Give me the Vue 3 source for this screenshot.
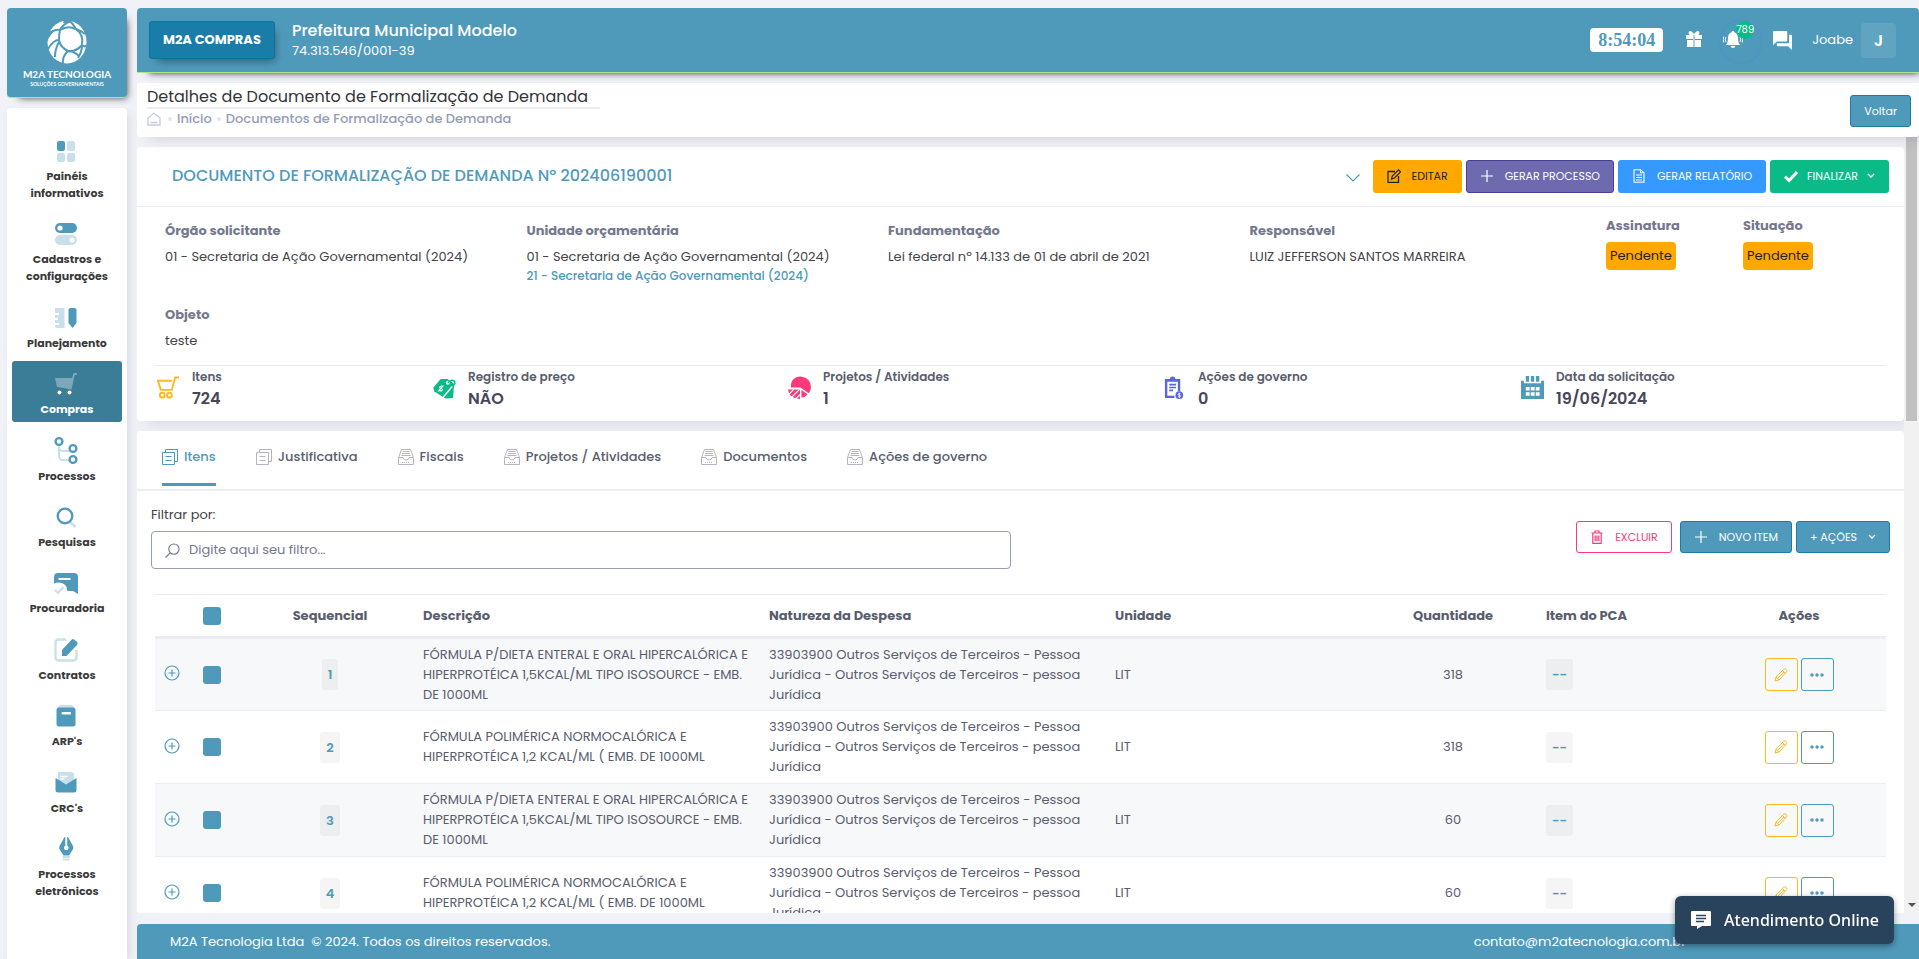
<script setup>
import { ref } from 'vue'

const glyphs = {
  painel: '<rect x="3" y="2" width="8" height="10" rx="2" fill="#4f9abb"/><rect x="13" y="2" width="8" height="10" rx="2" fill="#c9dfe9"/><rect x="3" y="14" width="8" height="9" rx="2" fill="#c9dfe9"/><rect x="13" y="14" width="8" height="9" rx="2" fill="#c9dfe9"/>',
  toggles: '<rect x="1" y="1" width="22" height="10" rx="5" fill="#4f9abb"/><rect x="1" y="13" width="22" height="10" rx="5" fill="#c9dfe9"/><circle cx="6" cy="6" r="2.6" fill="#fff"/><circle cx="18" cy="18" r="2.6" fill="#fff"/>',
  ruler: '<path d="M1 2h9.500v20H3a2 2 0 0 1-2-2v-1h4v-2H1v-3h3v-2H1V9h4V7H1z" fill="#c9dfe9"/><path d="M14.500 4a2 2 0 0 1 2-2h4a2 2 0 0 1 2 2v13l-4 5-4-5z" fill="#4f9abb"/>',
  cart: '<path d="M1 6h17l1.300-4.400Q19.500 1 20.200 1H23v2h-2.200L17.500 17.500 3 15z" fill="#7aa7ba"/><circle cx="5.500" cy="20.500" r="2" fill="#fff"/><circle cx="15.500" cy="20.500" r="2" fill="#fff"/>',
  branch: '<path d="M5 7v10q0 4 4 4h6M5 8q0 4 4 4h6" fill="none" stroke="#c9dfe9" stroke-width="2"/><g fill="#fff" stroke="#4f9abb" stroke-width="2.400"><circle cx="5" cy="2.500" r="3.400"/><circle cx="19" cy="9.500" r="3.400"/><circle cx="19" cy="20.500" r="3.400"/></g>',
  search: '<path d="m16 17 5.500 5" stroke="#c9dfe9" stroke-width="2.500"/><circle cx="11" cy="11" r="7.300" fill="none" stroke="#4f9abb" stroke-width="2.300"/>',
  board: '<path d="M4 2h16q4 0 4 4v17l-5-3h-5.500q-.5-8-8.500-8.500-3 0-5 1V6q0-4 4-4z" fill="#4f9abb"/><path d="M4.500 8h12" stroke="#fff" stroke-width="2"/><path d="m1 19 3 3 5.500-6" fill="none" stroke="#c9dfe9" stroke-width="2.200"/>',
  contract: '<path d="M12 1.500H5Q1.500 1.500 1.500 5v14q0 3.500 3.500 3.500h14q3.500 0 3.500-3.500v-7" fill="none" stroke="#c9dfe9" stroke-width="2.300"/><path d="M8 18v-6L17.500 1.800q1.500-1.500 3 0L23 4q1.200 1.500 0 3L12.500 18z" fill="#4f9abb"/>',
  box: '<path d="M4 3q1-2 3-2h10q2 0 3 2v2H4z" fill="#c9dfe9"/><rect x="2.500" y="3.500" width="19" height="19" rx="2.500" fill="#4f9abb"/><rect x="7.500" y="8" width="9.500" height="2.400" rx="1" fill="#fff"/>',
  mail: '<path d="M4 1h13q3 0 3 3v8l-8 4-8-4z" fill="#c9dfe9"/><path d="M6.500 5.500h7M6.500 8h4" stroke="#fff" stroke-width="1.300"/><path d="M1.500 7 12 13.500 22.500 7v12q0 2.500-2.500 2.500H4q-2.500 0-2.500-2.500z" fill="#4f9abb"/>',
  pen: '<path d="m10.500 0-5 9q-.7 2 .2 3.500l3.800 6h5.500l3.800-6q.9-1.500.2-3.500L14 0h-.8v8.700a2.300 2.300 0 1 1-1.900 0V0z" fill="#4f9abb"/><path d="M8.700 20h7.200M9 22.500h6.500" stroke="#c9dfe9" stroke-width="1.800"/>'
}

const menu = [
  { icon: 'painel', label: 'Painéis informativos' },
  { icon: 'toggles', label: 'Cadastros e configurações' },
  { icon: 'ruler', label: 'Planejamento' },
  { icon: 'cart', label: 'Compras', active: true },
  { icon: 'branch', label: 'Processos' },
  { icon: 'search', label: 'Pesquisas' },
  { icon: 'board', label: 'Procuradoria' },
  { icon: 'contract', label: 'Contratos' },
  { icon: 'box', label: "ARP's" },
  { icon: 'mail', label: "CRC's" },
  { icon: 'pen', label: 'Processos eletrônicos' }
]

const statGlyphs = {
  cart: '<g fill="none" stroke="#ffb822" stroke-width="2"><path d="M0 5h15.500M1 5l3 9.500h11.500L19 1.500h4"/><circle cx="5.500" cy="20" r="2.500"/><circle cx="13" cy="20" r="2.500"/></g>',
  tag: '<path d="M8 3h7l7 5-1 15-8 .5L1 16 .5 12z" fill="#0abb87"/><path d="m10 23 10-12" stroke="#fff" stroke-width="1.500"/><circle cx="15.500" cy="7" r="2" fill="#fff"/><path d="M15.500 7q4-4 7-1.500 1.500 3-2 4.500" fill="none" stroke="#0abb87" stroke-width="1.500"/><path d="M10.500 11q-3-1-3.500.7c0 1.800 3 .8 2.800 2.800-.8 1.800-3 1-4 .2M10.800 10l-5.500 6" fill="none" stroke="#fff" stroke-width="1.200"/>',
  pie: '<path d="M3 12Q2.500 1 13.500.5 24 2 24 12q-.5 4-2.500 6L13 12z" fill="#fd397a"/><path d="M14 14.500 20.500 19q-3 3.500-6.500 3.500z" fill="#fd397a"/><path d="M0 14h12.500v10Q1 23.500 0 14z" fill="#fd397a"/><path d="m1 19 5-5M4 22l8-8M8 24l5-5" stroke="#fff" stroke-width="1.300"/>',
  clip: '<path d="M2 3h5q.5-2.500 3-2.500T13 3h5v13h-2.500V6h-11v14.500H12V23H2z" fill="#5867dd"/><path d="M7 4.500h6M6.500 9h7M6.500 12h7M6.500 15h4" stroke="#5867dd" stroke-width="1.600"/><circle cx="17" cy="20" r="4" fill="#5867dd"/><path d="M18.300 18.500q-2.600-.8-2.600.5 0 1 1.300 1 1.500.2 1.300 1.200-.6 1-2.600.3M17 17.500v5.500" fill="none" stroke="#fff" stroke-width=".8"/>',
  cal: '<path d="M0 5h3v2.500h18V5h3v19H0z" fill="#4f9abb"/><path d="M5 0h3.500v6H5zM10.300 0h3.500v6h-3.500zM15.600 0h3.500v6h-3.500z" fill="#4f9abb"/><path d="M5 11.500h4v3.500H5zM10.200 11.500h4v3.500h-4zM15.400 11.500h4v3.500h-4zM5 17h4v3.500H5zM10.200 17h4v3.500h-4zM15.400 17h4v3.500h-4z" fill="#fff"/>'
}

const stats = [
  { icon: 'cart', label: 'Itens', value: '724' },
  { icon: 'tag', label: 'Registro de preço', value: 'NÃO' },
  { icon: 'pie', label: 'Projetos / Atividades', value: '1' },
  { icon: 'clip', label: 'Ações de governo', value: '0' },
  { icon: 'cal', label: 'Data da solicitação', value: '19/06/2024' }
]

const tabGlyphs = {
  copy: '<path d="M3.500 3.500V.5h12v12h-3M.5 3.500h12v12H.5zM3.500 7.500h6M3.500 11.500h6"/>',
  tray: '<path d="M.5 8.500v7h15v-7h-4.500q-.5 2.500-3 2.500t-3-2.500zM.5 8.500 3.500.5h9l3 8M4.500 2.500h7M4 4.500h8M3.500 6.500h9" /><path d="M4 13.500h8" stroke-dasharray="1 1"/>'
}

const tabs = [
  { icon: 'copy', label: 'Itens' },
  { icon: 'copy', label: 'Justificativa' },
  { icon: 'tray', label: 'Fiscais' },
  { icon: 'tray', label: 'Projetos / Atividades' },
  { icon: 'tray', label: 'Documentos' },
  { icon: 'tray', label: 'Ações de governo' }
]
const activeTab = ref('Itens')
const filter = ref('')

const formulaA = 'FÓRMULA P/DIETA ENTERAL E ORAL HIPERCALÓRICA E HIPERPROTÉICA 1,5KCAL/ML TIPO ISOSOURCE - EMB. DE 1000ML'
const formulaB = 'FÓRMULA POLIMÉRICA NORMOCALÓRICA E HIPERPROTÉICA 1,2 KCAL/ML ( EMB. DE 1000ML'
const nature = '33903900 Outros Serviços de Terceiros - Pessoa Jurídica - Outros Serviços de Terceiros - pessoa Jurídica'
const rows = [
  { seq: 1, desc: formulaA, qty: 318 },
  { seq: 2, desc: formulaB, qty: 318 },
  { seq: 3, desc: formulaA, qty: 60 },
  { seq: 4, desc: formulaB, qty: 60 }
]
</script>

<template>
  <div class="shell">
    <aside class="side">
      <a class="logo" href="#" aria-label="M2A Tecnologia">
        <svg class="globe" viewBox="0 0 40 44" aria-hidden="true">
          <ellipse cx="20" cy="22" rx="19.500" ry="21.500" fill="#fff" />
          <g fill="none" stroke="#4f9abb" stroke-width="2">
            <path d="M13 10q8-5 16-1 8 6 6 16-6 7-14 6-8-4-9-11 0-6 1-10z" />
            <path d="M0 15q7-6 13-5M13 10q3-6 11-9M29 9q-3-5-6-8M29 9q6 2 9 5M35 25q3 3 4 0M35 25q0 7-4 13M21 31q-6 6-5 12M12 20Q6 20 1 29M12 22q-4 7-4 15M21 31q6 0 11 5" />
          </g>
          <path d="M0 14q4-4 9-4-6 4-9 12zM17 0h7l-3 3h-5z" fill="#4f9abb" />
        </svg>
        <span class="logo-name">M2A TECNOLOGIA</span>
        <span class="logo-sub">SOLUÇÕES GOVERNAMENTAIS</span>
      </a>
      <nav class="menu">
        <a v-for="m in menu" :key="m.label" href="#" class="menu-item" :class="{ active: m.active }">
          <span class="menu-icon"><svg viewBox="0 0 24 24" aria-hidden="true" v-html="glyphs[m.icon]" /></span>
          <span class="menu-label">{{ m.label }}</span>
        </a>
      </nav>
    </aside>

    <div class="page">
      <header class="topbar">
        <button class="module" type="button">M2A COMPRAS</button>
        <div class="org">
          <div class="org-name">Prefeitura Municipal Modelo</div>
          <div class="org-id">74.313.546/0001-39</div>
        </div>
        <div class="tools">
          <span class="clock">8:54:04</span>
          <button class="tool gift" type="button" aria-label="Novidades">
            <svg viewBox="0 0 18 16"><path d="M1 4h3.500C2 1 5 -1 7 .8L9 3l2-2.200C13-1 16 1 13.500 4H17v4h-7V4H8v4H1z" fill="#fff" /><path d="M2 9h6v7H2zM10 9h6v7h-6z" fill="#fff" /><path d="M8 4h2v12H8z" fill="#a9cfe0" /></svg>
          </button>
          <button class="tool bell" type="button" aria-label="Notificações">
            <svg viewBox="0 0 20 18"><path d="M10 0q1.300 0 1.300 1.300Q15 2.500 15 7q0 5 2 7H3q2-2 2-7 0-4.500 3.700-5.700Q8.700 0 10 0zM7.500 15h5q-.5 2-2.500 2t-2.500-2z" fill="#fff" /><path d="M3 6q-1.500 2.500 0 5M.8 5.500q-1 3 0 6M17 6q1.500 2.500 0 5M19.200 5.500q1 3 0 6" fill="none" stroke="#fff" stroke-width=".9" /></svg>
            <span class="count">789</span>
          </button>
          <button class="tool chat" type="button" aria-label="Mensagens">
            <svg viewBox="0 0 20 20"><path d="M1 0h13q1 0 1 1v9q0 1-1 1H4l-4 4V1q0-1 1-1z" fill="#fff" /><path d="M17 4h2q1 0 1 1v15l-4-4H5q-1 0-1-1v-2h13z" fill="#fff" /></svg>
          </button>
          <button class="user" type="button"><span>Joabe</span><span class="avatar">J</span></button>
        </div>
      </header>

      <section class="subhead">
        <div>
          <h1>Detalhes de Documento de Formalização de Demanda</h1>
          <nav class="crumbs">
            <a href="#" aria-label="Página inicial"><svg viewBox="0 0 14 14"><path d="M1 13V6l6-5 6 5v7zM3.500 10.500h7" fill="none" stroke="#c5cbe2" stroke-width="1.300" /></svg></a>
            <i></i><a href="#">Início</a><i></i><a href="#">Documentos de Formalização de Demanda</a>
          </nav>
        </div>
        <button class="btn teal back" type="button">Voltar</button>
      </section>

      <div class="viewport">
        <main class="content">
          <section class="card">
            <div class="card-head">
              <h2>DOCUMENTO DE FORMALIZAÇÃO DE DEMANDA Nº 202406190001</h2>
              <button class="collapse" type="button" aria-label="Recolher"><svg viewBox="0 0 14 8"><path d="m.5.500 6.500 6.500 6.500-6.500" fill="none" stroke="#4f9abb" stroke-width="1.200" /></svg></button>
              <div class="doc-actions">
                <button class="btn amber" type="button">
                  <svg viewBox="0 0 14 14"><path d="M8 2.500H1v10.800h10.500V7" fill="none" stroke="#222" stroke-width="1.300" /><path d="M4.500 10 5.300 7 11.500.8l2 2L7.500 9z" fill="none" stroke="#222" stroke-width="1.200" /></svg>EDITAR
                </button>
                <button class="btn purple" type="button">
                  <svg viewBox="0 0 14 14"><path d="M7 1v12M1 7h12" stroke="#fff" stroke-width="1.200" /></svg>GERAR PROCESSO
                </button>
                <button class="btn blue" type="button">
                  <svg viewBox="0 0 14 14"><path d="M2 .7h6.500l3.500 3v9.600H2zM8.500.7v3H12M4 6h6M4 8.500h6M4 11h6" fill="none" stroke="#fff" stroke-width="1.100" /></svg>GERAR RELATÓRIO
                </button>
                <button class="btn green" type="button">
                  <svg viewBox="0 0 14 14"><path d="m1 7.500 4 4 8-8.500" fill="none" stroke="#fff" stroke-width="3" /></svg>FINALIZAR<svg class="caret" viewBox="0 0 8 6"><path d="m1 1 3 3 3-3" fill="none" stroke="#fff" stroke-width="1.400" /></svg>
                </button>
              </div>
            </div>

            <div class="details">
              <dl><dt>Órgão solicitante</dt><dd>01 - Secretaria de Ação Governamental (2024)</dd></dl>
              <dl><dt>Unidade orçamentária</dt><dd>01 - Secretaria de Ação Governamental (2024)<br /><a href="#">21 - Secretaria de Ação Governamental (2024)</a></dd></dl>
              <dl><dt>Fundamentação</dt><dd>Lei federal nº 14.133 de 01 de abril de 2021</dd></dl>
              <dl><dt>Responsável</dt><dd>LUIZ JEFFERSON SANTOS MARREIRA</dd></dl>
              <dl class="status"><dt>Assinatura</dt><dd><span class="pending">Pendente</span></dd></dl>
              <dl class="status"><dt>Situação</dt><dd><span class="pending">Pendente</span></dd></dl>
            </div>
            <div class="details object">
              <dl><dt>Objeto</dt><dd>teste</dd></dl>
            </div>

            <div class="stats">
              <div v-for="s in stats" :key="s.label" class="stat">
                <svg viewBox="0 0 24 24" aria-hidden="true" v-html="statGlyphs[s.icon]" />
                <div>
                  <div class="stat-label">{{ s.label }}</div>
                  <div class="stat-value">{{ s.value }}</div>
                </div>
              </div>
            </div>
          </section>

          <section class="card items">
            <div class="tabs" role="tablist">
              <button v-for="t in tabs" :key="t.label" type="button" role="tab" class="tab" :class="{ on: activeTab === t.label }" :aria-selected="activeTab === t.label" @click="activeTab = t.label">
                <svg viewBox="0 0 16 16" aria-hidden="true" v-html="tabGlyphs[t.icon]" />{{ t.label }}
              </button>
            </div>

            <div class="toolbar">
              <div class="filter">
                <label for="filter">Filtrar por:</label>
                <div class="field">
                  <svg viewBox="0 0 16 16" aria-hidden="true"><circle cx="9.500" cy="6.500" r="5.500" fill="none" stroke="#74788d" stroke-width="1.200" /><path d="m5.500 10.500-5 5" stroke="#74788d" stroke-width="1.300" /></svg>
                  <input id="filter" v-model="filter" type="text" placeholder="Digite aqui seu filtro..." />
                </div>
              </div>
              <div class="item-actions">
                <button class="btn danger" type="button">
                  <svg viewBox="0 0 14 14"><path d="M1.500 3h11M5 3V1h4v2M2.800 3v10.300h8.400V3M5.200 5.500v5.500M7 5.500v5.500M8.800 5.500v5.500" fill="none" stroke="#fd397a" stroke-width="1.200" /></svg>EXCLUIR
                </button>
                <button class="btn teal" type="button">
                  <svg viewBox="0 0 14 14"><path d="M7 1v12M1 7h12" stroke="#fff" stroke-width="1.200" /></svg>NOVO ITEM
                </button>
                <button class="btn teal" type="button">+ AÇÕES<svg class="caret" viewBox="0 0 8 6"><path d="m1 1 3 3 3-3" fill="none" stroke="#fff" stroke-width="1.400" /></svg></button>
              </div>
            </div>

            <table>
              <colgroup>
                <col class="c-open" /><col class="c-check" /><col class="c-seq" /><col class="c-text" /><col class="c-text" /><col class="c-unit" /><col class="c-seq" /><col class="c-pca" /><col class="c-act" />
              </colgroup>
              <thead>
                <tr>
                  <th></th>
                  <th><input type="checkbox" aria-label="Selecionar todos" /></th>
                  <th class="mid">Sequencial</th>
                  <th>Descrição</th>
                  <th>Natureza da Despesa</th>
                  <th>Unidade</th>
                  <th class="mid">Quantidade</th>
                  <th>Item do PCA</th>
                  <th class="mid">Ações</th>
                </tr>
              </thead>
              <tbody>
                <tr v-for="r in rows" :key="r.seq">
                  <td>
                    <button class="expand" type="button" :aria-label="'Expandir item ' + r.seq"><svg viewBox="0 0 16 16"><circle cx="8" cy="8" r="7" fill="none" stroke="#4f9abb" stroke-width="1.200" /><path d="M8 4.500v7M4.500 8h7" stroke="#4f9abb" stroke-width="1.200" /></svg></button>
                  </td>
                  <td><input type="checkbox" :aria-label="'Selecionar item ' + r.seq" /></td>
                  <td class="mid"><span class="chip">{{ r.seq }}</span></td>
                  <td class="desc">{{ r.desc }}</td>
                  <td>{{ nature }}</td>
                  <td>LIT</td>
                  <td class="mid">{{ r.qty }}</td>
                  <td><span class="chip">--</span></td>
                  <td class="mid">
                    <div class="row-actions">
                      <button class="sq edit" type="button" aria-label="Editar"><svg viewBox="0 0 14 14"><path d="m1 13 1-4L9.800 1.200q1.200-1 2.400.2t.4 2.400L5 12zM2 9l3 3M8.500 2.500l3 3M3.500 10.500l6.500-6.500" fill="none" stroke="#ffb822" stroke-width="1" /></svg></button>
                      <button class="sq more" type="button" aria-label="Mais ações"><svg viewBox="0 0 14 14"><g fill="#4f9abb"><circle cx="2" cy="7" r="1.700" /><circle cx="7" cy="7" r="1.700" /><circle cx="12" cy="7" r="1.700" /></g></svg></button>
                    </div>
                  </td>
                </tr>
              </tbody>
            </table>
          </section>
        </main>
        <div class="scrollbar" aria-hidden="true"><div class="thumb"></div><div class="arrow"></div></div>
      </div>

      <footer class="footer">
        <span>M2A Tecnologia Ltda&nbsp; © 2024. Todos os direitos reservados.</span>
        <a href="#">contato@m2atecnologia.com.br</a>
      </footer>
    </div>

    <button class="support" type="button">
      <svg viewBox="0 0 20 18" aria-hidden="true"><path d="M1 0h18q1 0 1 1v13q0 1-1 1h-8l-5 3v-3H1q-1 0-1-1V1q0-1 1-1z" fill="#fff" /><path d="M5 4.500h10M5 7.500h10M5 10.500h8" stroke="#2a435d" stroke-width="1.300" /></svg>
      Atendimento Online
    </button>
  </div>
</template>

<style>
body {
  background: #f1f2f7;
  overflow: hidden;
}
</style>

<style scoped>
* {
  box-sizing: border-box;
}
.shell {
  display: flex;
  gap: 10px;
  height: 100vh;
  padding: 8px 0 0 7px;
  overflow: hidden;
  font-family: Poppins, Inter, "Noto Sans", sans-serif;
  font-size: 13px;
  line-height: 20px;
  color: #48465b;
}
a {
  color: inherit;
  text-decoration: none;
}
button {
  font: inherit;
  color: inherit;
  background: none;
  border: 0;
  padding: 0;
  cursor: pointer;
}
svg {
  display: block;
  flex: none;
}
h1,
h2,
dl,
dd {
  margin: 0;
}

.side {
  display: flex;
  flex-direction: column;
  flex: none;
  gap: 10px;
  width: 120px;
}
.logo {
  display: flex;
  flex-direction: column;
  align-items: center;
  height: 90px;
  padding-top: 12px;
  color: #fff;
  background: #4f9abb;
  border-bottom: 1px solid #a9e88f;
  border-radius: 4px;
  box-shadow: 6px 6px 7px -6px rgba(0, 0, 0, 0.7);
}
.globe {
  width: 40px;
  height: 44px;
}
.logo-name {
  margin-top: 3px;
  font: 700 10px/14px Lato, sans-serif;
  white-space: nowrap;
}
.logo-sub {
  font: 700 5px/6px Lato, sans-serif;
  white-space: nowrap;
}
.menu {
  display: flex;
  flex: 1;
  flex-direction: column;
  justify-content: space-between;
  padding: 20px 5px 55px;
  background: #fff;
  border-radius: 4px 4px 0 0;
  box-shadow: 4px 4px 10px -2px rgba(82, 63, 105, 0.15);
}
.menu-item {
  display: flex;
  flex-direction: column;
  align-items: center;
  gap: 2px;
  padding: 8px 5px 4px;
  font-size: 11px;
  font-weight: 700;
  line-height: 17px;
  color: #3a3a3a;
  text-align: center;
  border-radius: 3px;
}
.menu-item.active {
  color: #fff;
  background: #3b7c96;
}
.menu-icon {
  display: grid;
  place-items: center;
  height: 30px;
  padding-right: 2px;
}
.menu-icon svg {
  width: 24px;
  height: 24px;
  overflow: visible;
}

.page {
  display: flex;
  flex: 1;
  flex-direction: column;
  min-width: 0;
}
.topbar {
  display: flex;
  flex: none;
  align-items: center;
  height: 65px;
  padding: 0 23px 0 12px;
  color: #fff;
  background: #4f9abb;
  border-bottom: 1px solid #a9e88f;
  border-radius: 4px 4px 0 0;
  box-shadow: 6px 6px 7px -6px rgba(0, 0, 0, 0.8);
}
.module {
  height: 38px;
  padding: 0 13px;
  font-weight: 700;
  background: #1a7da9;
  border: 1px solid #0b739f;
  border-radius: 3px;
  box-shadow: 4px 6px 8px -4px rgba(0, 0, 0, 0.4);
}
.org {
  margin-left: 17px;
}
.org-name {
  margin-top: 1px;
  font-size: 16px;
  font-weight: 500;
  line-height: 21px;
}
.tools {
  display: flex;
  align-items: center;
  margin-left: auto;
}
.clock {
  padding: 0 8px;
  font: bold 18px/24px "Liberation Serif", serif;
  color: #4f9abb;
  background: #fff;
  border-radius: 4px;
}
.gift {
  margin-left: 22px;
  padding-bottom: 3px;
}
.gift svg {
  width: 18px;
  height: 16px;
}
.bell {
  position: relative;
  margin-left: 20px;
}
.bell::after {
  content: "";
  position: absolute;
  top: -12px;
  left: -4px;
  width: 40px;
  height: 41px;
  border: 2px solid rgba(84, 130, 214, 0.25);
  border-radius: 50%;
}
.bell svg {
  width: 20px;
  height: 18px;
}
.count {
  position: absolute;
  z-index: 1;
  top: -10px;
  left: 13px;
  width: 18px;
  height: 18px;
  font-size: 10px;
  line-height: 18px;
  text-align: center;
  background: #0abb87;
  border-radius: 50%;
}
.chat {
  margin-left: 30px;
}
.chat svg {
  width: 19px;
  height: 19px;
}
.user {
  display: flex;
  align-items: center;
  gap: 8px;
  margin-left: 20px;
}
.avatar {
  width: 35px;
  font-size: 16px;
  font-weight: 600;
  line-height: 35px;
  background: rgba(255, 255, 255, 0.1);
  border-radius: 4px;
}

.subhead {
  position: relative;
  z-index: 1;
  display: flex;
  flex: none;
  justify-content: space-between;
  align-items: flex-start;
  height: 54px;
  margin-top: 10px;
  padding: 4px 8px 0 10px;
  background: #fff;
  border-radius: 0 0 4px 4px;
  box-shadow: 8px 6px 12px -4px rgba(82, 63, 105, 0.18);
}
.subhead h1 {
  padding-right: 12px;
  font-size: 16px;
  font-weight: 400;
  line-height: 20px;
  color: #333338;
  border-bottom: 2px solid #ebedf2;
}
.crumbs {
  display: flex;
  align-items: center;
  gap: 5px;
  font-weight: 500;
  color: #959cb6;
}
.crumbs svg {
  width: 14px;
  height: 14px;
}
.crumbs i {
  width: 4px;
  height: 4px;
  background: #e2e5ec;
  border-radius: 50%;
}
.crumbs i:first-of-type {
  margin-left: 2px;
}
.back {
  margin-top: 8px;
}

.viewport {
  display: flex;
  flex: 1;
  min-height: 0;
}
.content {
  flex: 1;
  min-width: 0;
  padding-top: 10px;
  overflow: hidden;
}
.scrollbar {
  display: flex;
  flex: none;
  flex-direction: column;
  justify-content: space-between;
  align-items: center;
  width: 15px;
  padding-bottom: 6px;
  background: #f1f1f1;
}
.thumb {
  width: 11px;
  height: 284px;
  background: #c1c1c1;
}
.arrow {
  border: 4px solid transparent;
  border-top-color: #505050;
  border-bottom: 0;
}

.card {
  background: #fff;
  border-radius: 4px;
  box-shadow: 6px 8px 14px -4px rgba(82, 63, 105, 0.14);
}
.card-head {
  display: flex;
  align-items: center;
  height: 60px;
  padding: 0 15px 0 35px;
  border-bottom: 1px solid #ebedf2;
}
.card-head h2 {
  padding-bottom: 2px;
  font-size: 16px;
  font-weight: 500;
  color: #4f9abb;
}
.collapse {
  margin: 3px 13px 0 auto;
}
.collapse svg {
  width: 14px;
  height: 8px;
}
.doc-actions {
  display: flex;
  gap: 4px;
}
.btn {
  display: flex;
  align-items: center;
  gap: 11px;
  height: 32px;
  padding: 0 13px 1px;
  font-size: 11px;
  color: #fff;
  white-space: nowrap;
  border: 1px solid transparent;
  border-radius: 3px;
}
.doc-actions .btn {
  height: 33px;
}
.btn svg {
  width: 14px;
  height: 14px;
}
.btn .caret {
  width: 8px;
  height: 6px;
}
.amber {
  color: #212529;
  background: #ffa800;
}
.purple {
  background: #6e6ab0;
  border-color: #463f97;
}
.blue {
  background: #3699ff;
}
.green {
  gap: 9px;
  background: #0abb87;
}
.teal {
  background: #4f9abb;
  border-color: #1a7da9;
}
.danger {
  margin-right: 4px;
  color: #fd397a;
  background: #fff;
  border-color: #fd397a;
}

.details {
  display: grid;
  grid-template-columns: repeat(3, 723fr) 713fr 274fr 302fr;
  padding: 13px 10px 0 28px;
}
.details dl {
  padding-top: 1px;
}
.details dt {
  font-weight: 700;
  color: #74788d;
}
.details dd {
  margin-top: 6px;
  line-height: 19px;
  color: #434349;
}
.details dd a {
  font-size: 12px;
  font-weight: 500;
  color: #4f9abb;
}
.details .status {
  padding-top: 0;
  margin-top: -4px;
}
.pending {
  display: inline-block;
  padding: 0 4px;
  line-height: 28px;
  color: #212529;
  background: #ffa800;
  border-radius: 4px;
}
.details.object {
  padding-top: 19px;
}
.stats {
  display: grid;
  grid-template-columns: 276fr 355fr 375fr 358fr 365fr;
  margin: 15px 18px 0;
  padding: 1px 0 10px 2px;
  border-top: 1px solid #ebedf2;
}
.stat {
  display: flex;
  gap: 12px;
}
.stat svg {
  width: 23px;
  height: 23px;
  margin-top: 9px;
}
.stat-label {
  font-size: 12px;
  font-weight: 600;
  color: #595d6e;
}
.stat-value {
  font-size: 16px;
  font-weight: 600;
  line-height: 24px;
  color: #48465b;
}

.items {
  margin-top: 10px;
}
.tabs {
  display: flex;
  gap: 40px;
  height: 60px;
  padding: 0 25px;
  border-bottom: 2px solid #ebedf2;
}
.tab {
  display: flex;
  align-items: center;
  gap: 6px;
  height: 55px;
  font-weight: 500;
  color: #595d6e;
  border-bottom: 3px solid transparent;
}
.tab svg {
  width: 16px;
  height: 16px;
  fill: none;
  stroke: #b5b3c9;
}
.tab.on {
  color: #4f9abb;
  border-bottom-color: #4f9abb;
}
.tab.on svg {
  stroke: #4f9abb;
}
.toolbar {
  display: flex;
  justify-content: space-between;
  align-items: flex-start;
  padding: 14px 14px 0;
}
.filter {
  width: calc(50% - 10px);
  color: #434349;
}
.filter label {
  display: block;
  margin-bottom: 6px;
}
.field {
  display: flex;
  align-items: center;
  gap: 9px;
  height: 38px;
  padding: 0 13px;
  border: 1px solid #959cb6;
  border-radius: 4px;
}
.field svg {
  width: 15px;
  height: 15px;
}
.field input {
  flex: 1;
  min-width: 0;
  padding: 0;
  font: inherit;
  color: #495057;
  background: none;
  border: 0;
  outline: 0;
}
.field input::placeholder {
  color: #74788d;
  opacity: 1;
}
.item-actions {
  display: flex;
  gap: 4px;
  margin-top: 16px;
}

table {
  width: calc(100% - 36px);
  margin: 25px 18px 0;
  table-layout: fixed;
  border-collapse: collapse;
  border-top: 1px solid #ebedf2;
}
.c-open {
  width: 36px;
}
.c-check {
  width: 58px;
}
.c-seq {
  width: 162px;
}
.c-text {
  width: 346px;
}
.c-unit {
  width: 269px;
}
.c-pca {
  width: 178px;
}
.c-act {
  width: 174px;
}
th {
  height: 43px;
  padding: 0 12px;
  font-weight: 700;
  color: #595d6e;
  text-align: left;
  border-bottom: 3px solid #ebedf2;
}
td {
  height: 73px;
  padding: 5px 12px;
  color: #595d6e;
  border-bottom: 1px solid #ebedf2;
}
.desc {
  padding-right: 4px;
}
tbody tr:nth-child(odd) {
  background: #f7f8fa;
}
.mid {
  text-align: center;
}
th:first-child,
td:first-child {
  padding: 0 9px 3px;
}
.expand {
  display: block;
}
.expand svg {
  width: 16px;
  height: 16px;
}
input[type="checkbox"] {
  display: block;
  width: 18px;
  height: 18px;
  margin: 0;
  appearance: none;
  background: #4f9abb;
  border-radius: 3px;
}
.chip {
  display: inline-block;
  padding: 0 6px;
  font-weight: 600;
  line-height: 31px;
  color: #4f9abb;
  background: rgba(0, 0, 0, 0.04);
  border-radius: 3px;
}
.row-actions {
  display: flex;
  justify-content: center;
  gap: 3px;
}
.sq {
  display: grid;
  place-items: center;
  width: 33px;
  height: 33px;
  border: 1px solid #4f9abb;
  border-radius: 3px;
}
.sq.edit {
  border-color: #ffb822;
}
.sq svg {
  width: 14px;
  height: 14px;
}

.footer {
  display: flex;
  flex: none;
  justify-content: space-between;
  align-items: center;
  height: 35px;
  margin-top: 11px;
  padding: 0 233px 0 33px;
  color: #fff;
  background: #4f9abb;
  border-radius: 4px 0 0 0;
}
.support {
  position: fixed;
  right: 25px;
  bottom: 15px;
  z-index: 2;
  display: flex;
  align-items: center;
  gap: 13px;
  height: 48px;
  padding: 0 15px 0 16px;
  font: 500 16px/24px "Noto Sans", "Open Sans", sans-serif;
  color: #fff;
  background: #2a435d;
  border-radius: 6px;
  box-shadow: 0 2px 6px rgba(0, 0, 0, 0.4);
}
.support svg {
  width: 20px;
  height: 18px;
}
</style>
